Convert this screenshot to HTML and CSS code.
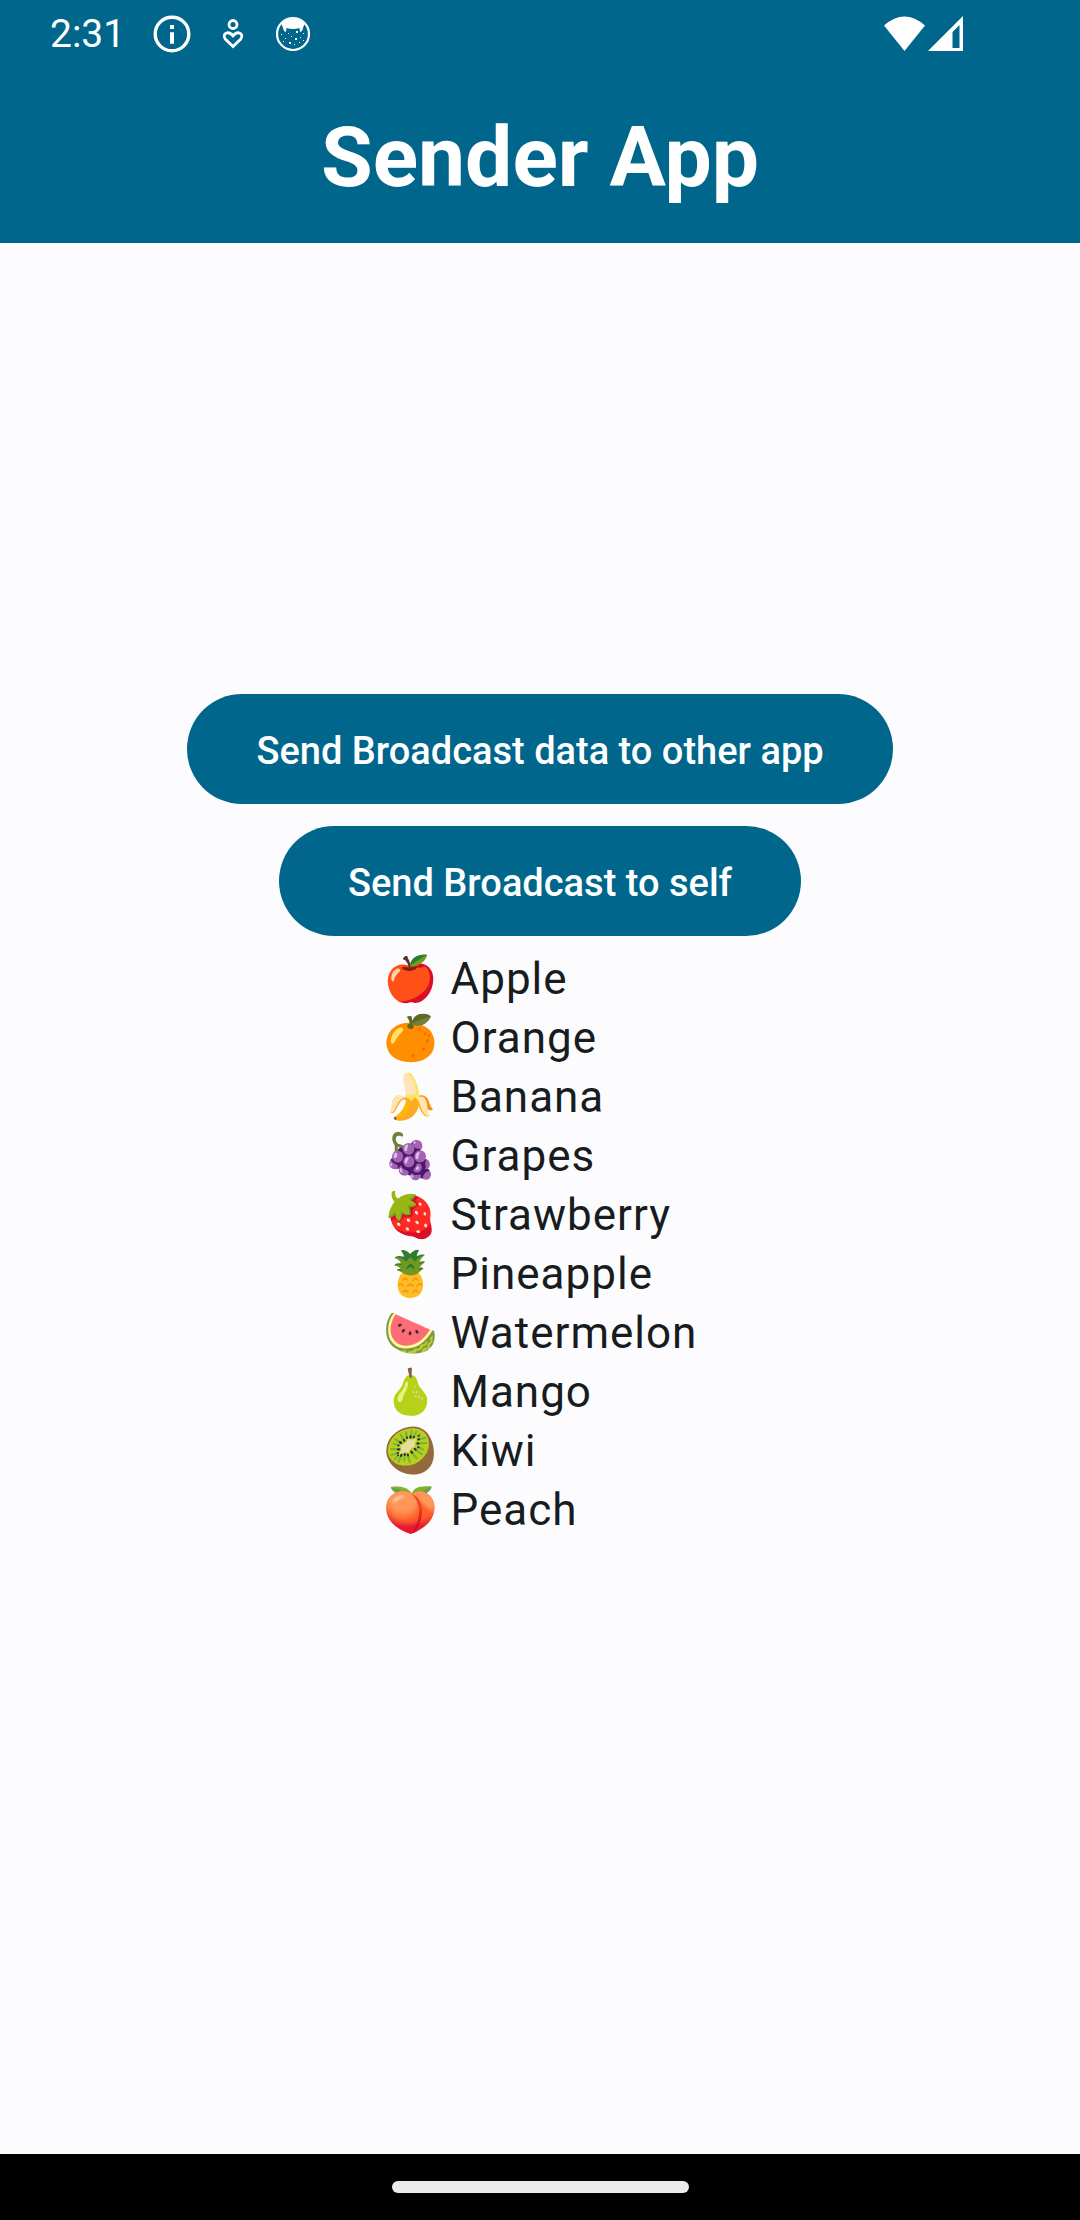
FILE: index.html
```html
<!DOCTYPE html>
<html lang="en">
<head>
<meta charset="utf-8">
<meta name="viewport" content="width=device-width, initial-scale=1">
<title>Sender App</title>
<link rel="stylesheet" href="styles.css">
</head>
<body>
<header class="app-header">
  <div class="status-bar">
    <span class="clock">2:31</span>
    <div class="notifications">
      <svg width="38" height="38" viewBox="0 0 38 38" aria-hidden="true"><circle cx="19" cy="19" r="16.800" fill="none" stroke="#fff" stroke-width="3.400"/><path fill="#fff" d="M17 10h4v4h-4zM17 17.300h4v11.500h-4z"/></svg>
      <svg width="22" height="32" viewBox="0 0 22 32" aria-hidden="true"><g fill="none" stroke="#fff" stroke-width="2.800"><circle cx="11" cy="6.500" r="4"/><path d="M11 28.500 3.200 21C-.5 15.500 6.500 12 11 17.800 15.500 12 22.500 15.500 18.800 21Z"/></g></svg>
      <svg width="36" height="36" viewBox="0 0 36 36" aria-hidden="true"><circle cx="18" cy="18" r="16" fill="none" stroke="#fff" stroke-width="2.200"/><path fill="#fff" d="M6 7Q18-3 30 7L28.500 10.500 27 15 25 16 24.500 12Q18 14 11.500 12L11 16 9 15 7.500 10.500Z"/><g fill="#fff"><path d="M21 15h2v2h-2zM10 22h1v1h-1zM16 20h1v1h-1zM20 22h2v2h-2zM25 21h1v1h-1zM14 26h2v2h-2zM19 28h1v1h-1zM24 26h1v1h-1zM6 18h1v1H6zM13 17h1v1h-1zM28 17h1v1h-1zM8 25h1v1H8zM28 24h1v1h-1z"/></g></svg>
    </div>
    <div class="signals">
      <svg width="42" height="36" viewBox="0 0 42 36" aria-hidden="true"><path fill="#fff" d="M0 9.500Q20.500-8.500 41 9.500L20.500 35Z"/></svg>
      <svg width="36" height="36" viewBox="0 0 36 36" aria-hidden="true"><path fill="#fff" fill-rule="evenodd" d="M0 35 35 0V35ZM24.500 16V32H31.500V9Z"/></svg>
    </div>
  </div>
  <h1 class="title">Sender App</h1>
</header>
<main class="content">
  <div class="actions">
    <button type="button" class="action">Send Broadcast data to other app</button>
    <button type="button" class="action">Send Broadcast to self</button>
  </div>
  <ul class="fruits">
    <li>🍎 Apple</li>
    <li>🍊 Orange</li>
    <li>🍌 Banana</li>
    <li>🍇 Grapes</li>
    <li>🍓 Strawberry</li>
    <li>🍍 Pineapple</li>
    <li>🍉 Watermelon</li>
    <li>🍐 Mango</li>
    <li>🥝 Kiwi</li>
    <li>🍑 Peach</li>
  </ul>
</main>
<footer class="nav-bar"><div class="home-handle"></div></footer>
</body>
</html>
```
FILE: styles.css
```css
* { box-sizing: border-box; }

body {
  display: flex;
  flex-direction: column;
  min-height: 100vh;
  margin: 0;
  background: #fcfcff;
  color: #191c1e;
  font-family: Roboto, sans-serif;
}

.app-header {
  background: #00668b;
  color: #fff;
}

.status-bar {
  display: flex;
  align-items: center;
  height: 67px;
  padding: 0 116px 0 50px;
}

.clock {
  font-size: 39px;
  line-height: 68px;
}

.notifications {
  display: flex;
  align-items: center;
  gap: 31px;
  margin-left: 28px;
}

.signals {
  display: flex;
  align-items: center;
  gap: 2px;
  margin-left: auto;
}

svg { display: block; }

.title {
  margin: 0;
  padding: 43px 16px 37px;
  font-size: 84px;
  font-weight: 700;
  line-height: 96px;
  text-align: center;
}

.content {
  flex: 1;
  display: flex;
  flex-direction: column;
  align-items: center;
  justify-content: center;
  padding-bottom: 164px;
}

.actions {
  display: flex;
  flex-direction: column;
  align-items: center;
  gap: 22px;
}

.action {
  min-height: 110px;
  padding: 4px 69px 0;
  border: 0;
  border-radius: 55px;
  background: #00668b;
  color: #fff;
  font: 500 38px/56px Roboto, sans-serif;
}

.fruits {
  margin: 14px 0 0;
  padding: 0;
  list-style: none;
  font-size: 44px;
  line-height: 59px;
  letter-spacing: 1px;
}

.nav-bar {
  display: flex;
  align-items: center;
  justify-content: center;
  height: 66px;
  background: #000;
}

.home-handle {
  width: 297px;
  height: 12px;
  border-radius: 6px;
  background: #ebebeb;
}
```
